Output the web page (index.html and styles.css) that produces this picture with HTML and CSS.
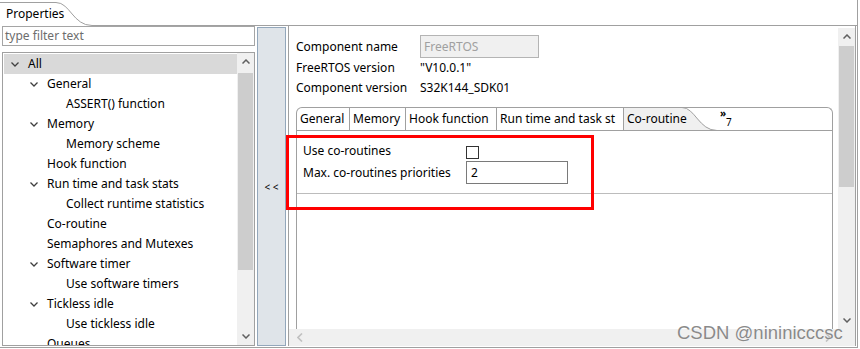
FILE: index.html
```html
<!DOCTYPE html>
<html lang="en">
<head>
  <meta charset="UTF-8" />
  <title>Properties</title>
  <link rel="stylesheet" href="styles.css">
</head>
<body>
  <div class="frame">
    <!-- view tab -->
    <div class="view-tabs">
      <div class="view-tab">
        <svg class="tab-shape" width="92" height="26" viewBox="0 0 92 26"><path d="M0 2.5 H56 C70 2.5 73 25.5 92 25.5" fill="none" stroke="#a0a0a0"/></svg>
        Properties
      </div>
      <div class="view-tabs-rest"></div>
    </div>

    <div class="view-body">
      <!-- left: filter + tree -->
      <div class="left">
        <div class="filter">type filter text</div>
        <div class="tree">
          <div class="tree-rows">
            <div class="row l1 sel"><span class="tog"><svg width="8" height="5"><polyline points="0.5,0.5 4,4 7.5,0.5" fill="none" stroke="#404040" stroke-width="1.3"/></svg></span>All</div>
            <div class="row l2"><span class="tog"><svg width="8" height="5"><polyline points="0.5,0.5 4,4 7.5,0.5" fill="none" stroke="#404040" stroke-width="1.3"/></svg></span>General</div>
            <div class="row l3"><span class="tog"></span>ASSERT() function</div>
            <div class="row l2"><span class="tog"><svg width="8" height="5"><polyline points="0.5,0.5 4,4 7.5,0.5" fill="none" stroke="#404040" stroke-width="1.3"/></svg></span>Memory</div>
            <div class="row l3"><span class="tog"></span>Memory scheme</div>
            <div class="row l2"><span class="tog"></span>Hook function</div>
            <div class="row l2"><span class="tog"><svg width="8" height="5"><polyline points="0.5,0.5 4,4 7.5,0.5" fill="none" stroke="#404040" stroke-width="1.3"/></svg></span>Run time and task stats</div>
            <div class="row l3"><span class="tog"></span>Collect runtime statistics</div>
            <div class="row l2"><span class="tog"></span>Co-routine</div>
            <div class="row l2"><span class="tog"></span>Semaphores and Mutexes</div>
            <div class="row l2"><span class="tog"><svg width="8" height="5"><polyline points="0.5,0.5 4,4 7.5,0.5" fill="none" stroke="#404040" stroke-width="1.3"/></svg></span>Software timer</div>
            <div class="row l3"><span class="tog"></span>Use software timers</div>
            <div class="row l2"><span class="tog"><svg width="8" height="5"><polyline points="0.5,0.5 4,4 7.5,0.5" fill="none" stroke="#404040" stroke-width="1.3"/></svg></span>Tickless idle</div>
            <div class="row l3"><span class="tog"></span>Use tickless idle</div>
            <div class="row l2"><span class="tog"></span>Queues</div>
          </div>
          <div class="vscroll">
            <div class="sb-btn"><svg width="8" height="5"><polyline points="0.5,4.5 4,1 7.5,4.5" fill="none" stroke="#606060" stroke-width="1.5"/></svg></div>
            <div class="thumb tree-thumb"></div>
            <div class="sb-track"></div>
            <div class="sb-btn"><svg width="8" height="5"><polyline points="0.5,0.5 4,4 7.5,0.5" fill="none" stroke="#606060" stroke-width="1.5"/></svg></div>
          </div>
        </div>
      </div>

      <!-- collapse splitter -->
      <div class="splitter">&lt; &lt;</div>

      <!-- right: component page -->
      <div class="right">
        <div class="right-main">
          <div class="content">
            <div class="prop first"><span class="k">Component name</span><span class="ro">FreeRTOS</span></div>
            <div class="prop"><span class="k">FreeRTOS version</span><span>"V10.0.1"</span></div>
            <div class="prop"><span class="k">Component version</span><span>S32K144_SDK01</span></div>

            <div class="folder">
              <div class="tabstrip">
                <div class="tab t-general">General</div>
                <div class="tab t-memory">Memory</div>
                <div class="tab t-hook">Hook function</div>
                <div class="tab t-run">Run time and task st</div>
                <div class="tab t-co active">
                  <svg class="active-shape" width="94" height="24" viewBox="0 0 94 24"><path d="M0 1 H58 C71 1 75 23 93 23 H0 Z" fill="#f0f0f0"/><path d="M58 0.5 C71 0.5 75 23.5 93 23.5" fill="none" stroke="#a0a0a0"/></svg>
                  <span class="tab-text">Co-routine</span>
                </div>
                <div class="more"><span class="more-a">&raquo;</span><span class="more-n">7</span></div>
              </div>
              <div class="opts">
                <div class="opt"><span class="k">Use co-routines</span><span class="check"></span></div>
                <div class="opt tall"><span class="k">Max. co-routines priorities</span><span class="num">2</span></div>
              </div>
              <div class="sep"></div>
            </div>
          </div>
          <div class="vscroll right-scroll">
            <div class="sb-btn"><svg width="8" height="5"><polyline points="0.5,4.5 4,1 7.5,4.5" fill="none" stroke="#606060" stroke-width="1.5"/></svg></div>
            <div class="thumb main-thumb"></div>
            <div class="sb-track"></div>
            <div class="sb-btn"><svg width="8" height="5"><polyline points="0.5,0.5 4,4 7.5,0.5" fill="none" stroke="#606060" stroke-width="1.5"/></svg></div>
          </div>
        </div>
        <div class="hscroll">
          <svg width="6" height="9"><polyline points="5,0.5 1,4.5 5,8.5" fill="none" stroke="#c0c0c0" stroke-width="1.6"/></svg>
          <svg class="h-right" width="6" height="9"><polyline points="1,0.5 5,4.5 1,8.5" fill="none" stroke="#c0c0c0" stroke-width="1.6"/></svg>
        </div>
      </div>
    </div>
  </div>

  <!-- annotation + watermark over the screenshot -->
  <div class="annot"></div>
  <div class="watermark">CSDN @nininicccsc</div>
</body>
</html>
```

FILE: styles.css
```css
* {
  box-sizing: border-box;
}

body {
  margin: 0;
  width: 860px;
  height: 349px;
  overflow: hidden;
  position: relative;
  background: #fff;
  color: #000;
  font-family: "Noto Sans", "Liberation Sans", sans-serif;
  font-size: 12px;
  line-height: 20px;
}

.frame {
  width: 858px;
  height: 348px;
  border-right: 1px solid #a0a0a0;
  border-bottom: 1px solid #a0a0a0;
  display: flex;
  flex-direction: column;
}

/* view tab */
.view-tabs {
  display: flex;
  height: 26px;
  flex: none;
}

.view-tab {
  position: relative;
  width: 92px;
  height: 26px;
  padding: 4px 0 0 6px;
}

.tab-shape {
  position: absolute;
  left: 0;
  top: 0;
}

.view-tabs-rest {
  flex: 1;
  border-bottom: 1px solid #a0a0a0;
}

.view-body {
  flex: 1;
  display: flex;
  min-height: 0;
}

/* left side */
.left {
  width: 255px;
  flex: none;
  padding: 0 0 1px 2px;
  display: flex;
  flex-direction: column;
}

.filter {
  height: 20px;
  border: 1px solid #a5a5a5;
  padding-left: 2px;
  line-height: 18px;
  color: #6d6d6d;
  flex: none;
}

.tree {
  flex: 1;
  margin-top: 6px;
  border: 1px solid #a0a0a0;
  display: flex;
  overflow: hidden;
}

.tree-rows {
  flex: 1;
  padding: 1px 0 0 1px;
  overflow: hidden;
}

.row {
  height: 20px;
  display: flex;
  align-items: center;
  white-space: nowrap;
}

.row.sel {
  background: #d9d9d9;
}

.l1 { padding-left: 5px; }
.l2 { padding-left: 24px; }
.l3 { padding-left: 43px; }

.tog {
  width: 19px;
  flex: none;
  display: flex;
  align-items: center;
}

.tog svg {
  margin-left: 2px;
}

/* scrollbars */
.vscroll {
  width: 17px;
  flex: none;
  background: #f0f0f0;
  display: flex;
  flex-direction: column;
}

.sb-btn {
  height: 17px;
  flex: none;
  display: flex;
  align-items: center;
  justify-content: center;
}

.thumb {
  background: #cdcdcd;
  margin: 0 1px;
  flex: none;
}

.tree-thumb {
  margin-top: 3px;
  height: 197px;
}

.main-thumb {
  margin-top: 1px;
  height: 141px;
}

.sb-track {
  flex: 1;
}

/* splitter */
.splitter {
  width: 29px;
  flex: none;
  margin: 1px 0 1px 2px;
  border: 1px solid #93a7bb;
  background: #dfe4e9;
  display: flex;
  align-items: center;
  justify-content: center;
  font-size: 10px;
}

/* right side */
.right {
  width: 568px;
  flex: none;
  margin: 0 1px 1px 2px;
  border-left: 1px solid #a0a0a0;
  border-right: 1px solid #a0a0a0;
  display: flex;
  flex-direction: column;
}

.right-main {
  flex: 1;
  display: flex;
  min-height: 0;
}

.content {
  flex: 1;
  padding: 9px 0 0 7px;
  overflow: hidden;
}

.right-scroll {
  margin-top: 2px;
}

.prop {
  display: flex;
  align-items: center;
  height: 20px;
}

.prop.first {
  height: 23px;
}

.prop .k {
  width: 124px;
  flex: none;
}

.ro {
  width: 119px;
  height: 23px;
  border: 1px solid #b4b4b4;
  background: #f0f0f0;
  color: #a0a0a0;
  padding-left: 3px;
  line-height: 21px;
}

/* tab folder */
.folder {
  width: 537px;
  height: 260px;
  margin-top: 9px;
  border: 1px solid #a0a0a0;
  border-bottom: none;
  border-radius: 6px 6px 0 0;
}

.tabstrip {
  height: 23px;
  border-bottom: 1px solid #a0a0a0;
  display: flex;
  line-height: 22px;
}

.tab {
  padding-left: 3px;
  border-right: 1px solid #a0a0a0;
  white-space: nowrap;
  overflow: hidden;
  flex: none;
}

.t-general { width: 53px; border-top-left-radius: 5px; }
.t-memory { width: 56px; }
.t-hook { width: 91px; }
.t-run { width: 127px; }

.tab.active {
  width: 94px;
  border-right: none;
  position: relative;
  overflow: visible;
}

.active-shape {
  position: absolute;
  left: 0;
  top: -1px;
}

.tab-text {
  position: relative;
}

.more {
  display: flex;
  flex-direction: column;
  margin-left: 2px;
  padding-top: 1px;
  font-size: 10px;
  line-height: 9px;
}

.more-a {
  font-weight: bold;
}

.more-n {
  padding-left: 6px;
}

.opts {
  padding: 10px 0 0 6px;
}

.opt {
  display: flex;
  align-items: center;
  height: 20px;
}

.opt.tall {
  height: 23px;
}

.opt .k {
  width: 163px;
  flex: none;
}

.check {
  width: 13px;
  height: 13px;
  margin-top: 2px;
  border: 1px solid #333;
  background: #fff;
}

.num {
  width: 102px;
  height: 23px;
  border: 1px solid #7a7a7a;
  padding-left: 4px;
  line-height: 21px;
}

.sep {
  height: 1px;
  margin-top: 9px;
  background: #bcbcbc;
}

.hscroll {
  height: 17px;
  flex: none;
  background: #f0f0f0;
  display: flex;
  align-items: center;
  padding-left: 8px;
}

.h-right {
  margin-left: auto;
  margin-right: 24px;
}

/* overlays */
.annot {
  position: absolute;
  left: 286px;
  top: 135px;
  width: 308px;
  height: 75px;
  border: 3px solid #ff0000;
}

.watermark {
  position: absolute;
  left: 677px;
  top: 322px;
  font-family: "Liberation Sans", sans-serif;
  font-size: 18.5px;
  line-height: 21px;
  color: #8a8a8a;
  text-shadow: 0 0 1px #fff;
}
```
